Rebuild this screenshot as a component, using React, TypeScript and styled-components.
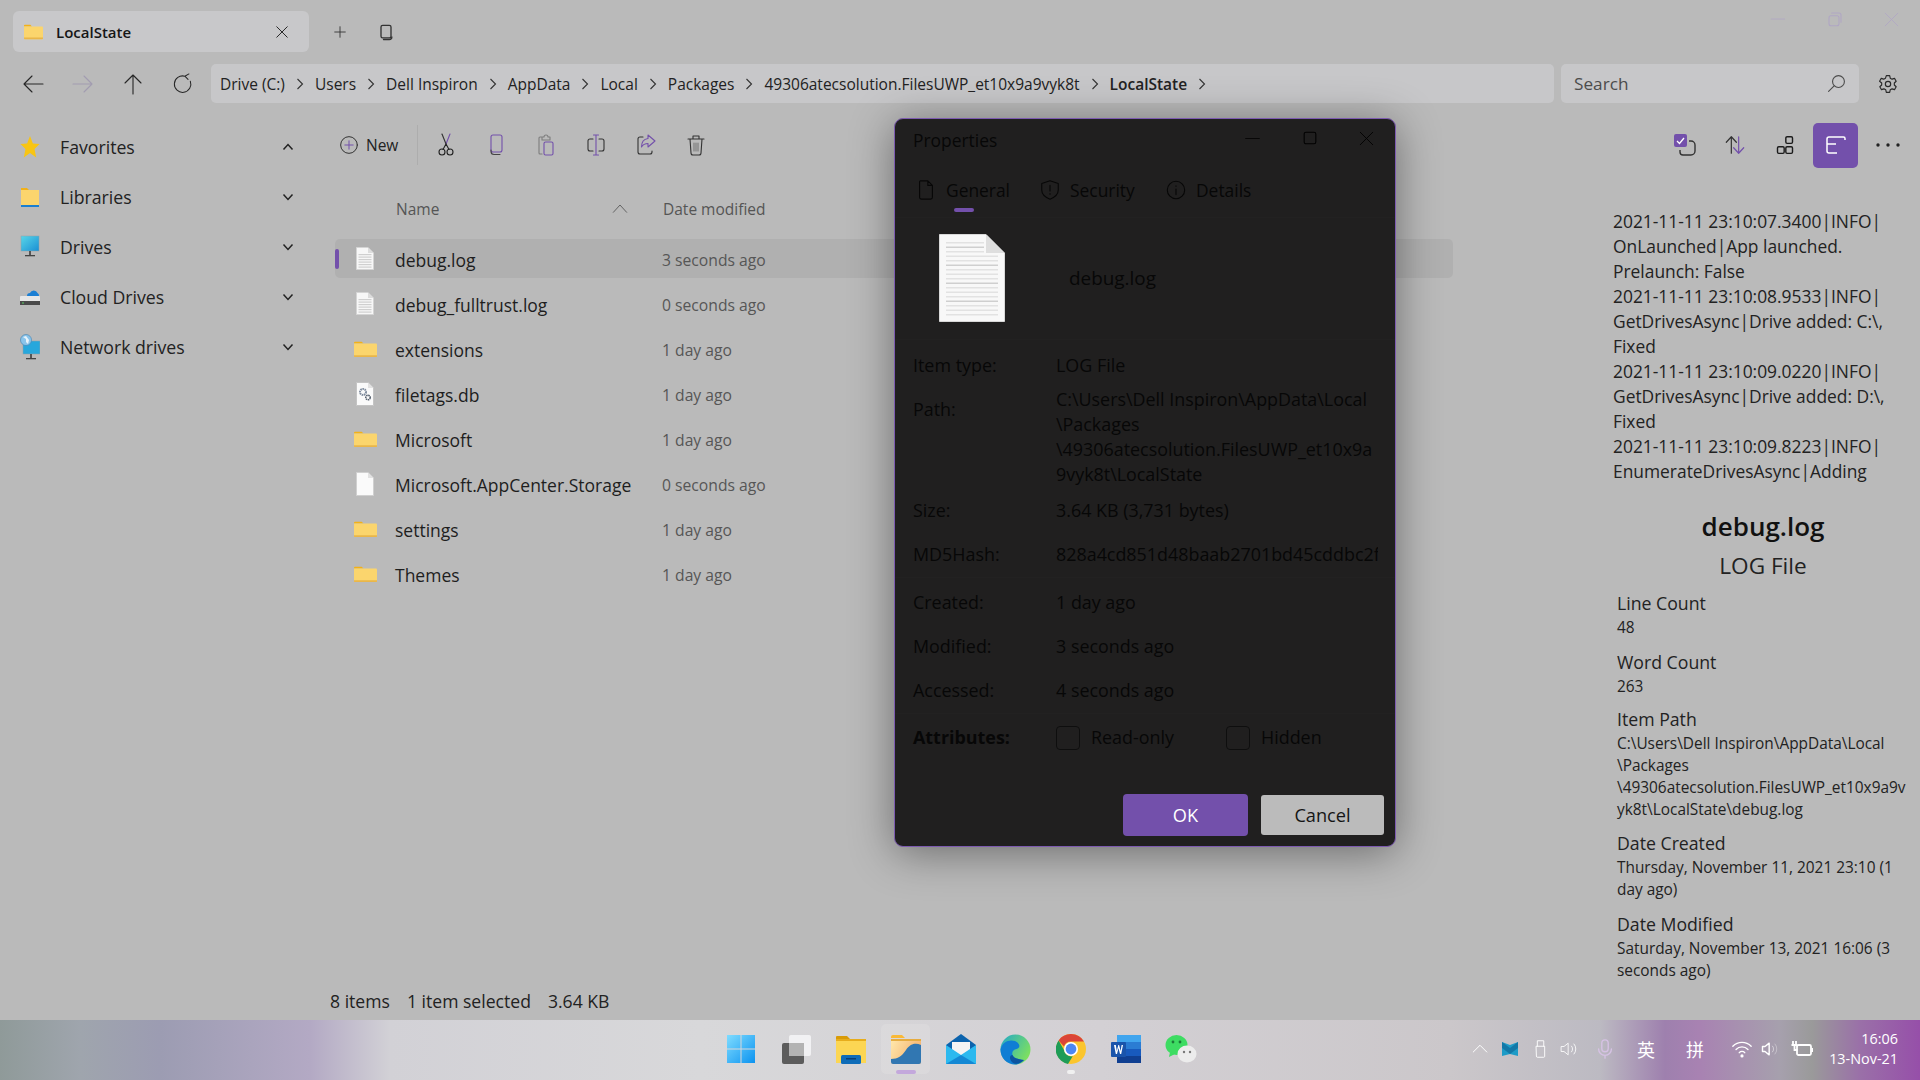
import React from "react";
import styled, { createGlobalStyle } from "styled-components";

const FONT = `"Open Sans", "Noto Sans", "Noto Sans CJK SC", sans-serif`;
const PURPLE = "#7350ab";

const GlobalStyle = createGlobalStyle`
  html, body {
    margin: 0;
    padding: 0;
    height: 100%;
    overflow: hidden;
    background: #bababa;
  }
  #root {
    height: 100%;
  }
  * {
    box-sizing: border-box;
  }
`;

const Page = styled.div`
  position: relative;
  width: 1920px;
  height: 1080px;
  display: flex;
  flex-direction: column;
  font-family: ${FONT};
  color: #1c1c1c;
  background: #bababa;
  overflow: hidden;
`;

const TitleBar = styled.div`
  height: 64px;
  flex: none;
  display: flex;
  align-items: flex-start;
  padding: 11px 0 0 13px;
`;

const Tab = styled.div`
  width: 296px;
  height: 41px;
  border-radius: 6px;
  background: #c8c8ca;
  display: flex;
  align-items: center;
  padding: 0 18px 0 11px;
  gap: 13px;
  font-size: 15px;
  font-weight: 600;
  color: #161616;
`;

const TabLabel = styled.span`
  flex: 1;
`;

const TabAction = styled.span<{ $first?: boolean }>`
  width: 46px;
  height: 41px;
  display: flex;
  align-items: center;
  justify-content: center;
  margin-left: ${(p) => (p.$first ? "8px" : "0")};
  color: #333;
`;

const WindowControls = styled.div`
  margin-left: auto;
  margin-top: -11px;
  display: flex;
  color: #b0a6c4;
`;

const WindowButton = styled.span`
  width: 57px;
  height: 38px;
  display: flex;
  align-items: center;
  justify-content: center;
`;

const AddressRow = styled.div`
  height: 39px;
  flex: none;
  display: flex;
  align-items: center;
  padding-left: 8px;
`;

const NavButton = styled.span<{ $muted?: boolean }>`
  width: 50px;
  height: 39px;
  display: flex;
  align-items: center;
  justify-content: center;
  color: ${(p) => (p.$muted ? "#a29cb0" : "#262626")};
`;

const AddressBar = styled.div`
  width: 1343px;
  height: 39px;
  margin-left: 3px;
  border-radius: 5px;
  background: #c7c7c9;
  display: flex;
  align-items: center;
  padding-left: 9px;
  font-size: 15.5px;
  white-space: nowrap;
  color: #222;
`;

const Crumb = styled.span<{ $current?: boolean }>`
  font-weight: ${(p) => (p.$current ? 600 : 400)};
`;

const CrumbSep = styled.span`
  width: 30px;
  display: flex;
  justify-content: center;
  color: #333;
`;

const SearchBox = styled.div`
  width: 298px;
  height: 39px;
  margin-left: 7px;
  border-radius: 5px;
  background: #c7c7c9;
  display: flex;
  align-items: center;
  justify-content: space-between;
  padding: 0 13px;
  font-size: 17.2px;
  color: #4c4c4c;
`;

const SettingsButton = styled.span`
  width: 58px;
  display: flex;
  justify-content: center;
  color: #2a2a2a;
`;

const Body = styled.div`
  flex: 1;
  min-height: 0;
  display: flex;
  padding-top: 19px;
`;

const Sidebar = styled.nav`
  width: 330px;
  flex: none;
`;

const SidebarItem = styled.div`
  height: 50px;
  display: flex;
  align-items: center;
  padding-left: 18px;
  font-size: 17.7px;
  color: #222;
`;

const SidebarIcon = styled.span`
  width: 24px;
  height: 30px;
  display: flex;
  align-items: center;
  justify-content: center;
  margin-right: 18px;
`;

const SidebarLabel = styled.span`
  flex: 1;
`;

const SidebarChevron = styled.span`
  width: 14px;
  margin-right: 35px;
  display: flex;
  color: #222;
`;

const Main = styled.main`
  flex: 1;
  min-width: 0;
  display: flex;
  flex-direction: column;
`;

const CommandBar = styled.div`
  height: 46px;
  flex: none;
  display: flex;
  align-items: center;
  padding-left: 9px;
`;

const NewButton = styled.div`
  display: flex;
  align-items: center;
  gap: 7px;
  width: 78px;
  font-size: 15.5px;
  color: #222;
`;

const BarDivider = styled.span`
  width: 1px;
  height: 40px;
  background: #adadad;
  margin-right: 3px;
`;

const BarIcon = styled.span`
  width: 50px;
  height: 46px;
  display: flex;
  align-items: center;
  justify-content: center;
`;

const BarRight = styled.div`
  margin-left: auto;
  padding-right: 7px;
  display: flex;
  align-items: center;
`;

const ActiveTile = styled.span`
  width: 45px;
  height: 45px;
  margin: 0 5px 0 3px;
  border-radius: 5px;
  background: ${PURPLE};
  display: flex;
  align-items: center;
  justify-content: center;
`;

const Content = styled.div`
  flex: 1;
  min-height: 0;
  display: flex;
`;

const FilePane = styled.section`
  flex: 1;
  min-width: 0;
  padding: 20px 0 0 5px;
`;

const ColumnHead = styled.div`
  height: 42px;
  width: 1118px;
  margin-bottom: 9px;
  display: flex;
  align-items: center;
  padding-left: 61px;
  font-size: 15.5px;
  color: #555;
`;

const NameHead = styled.span`
  width: 216px;
`;

const SortMark = styled.span`
  width: 51px;
  display: flex;
  color: #555;
`;

const FileRow = styled.div<{ $selected?: boolean }>`
  position: relative;
  width: 1118px;
  height: 39px;
  margin-bottom: 6px;
  border-radius: 5px;
  display: flex;
  align-items: center;
  padding-left: 15px;
  background: ${(p) => (p.$selected ? "#b0b0b0" : "transparent")};
`;

const SelectBar = styled.span`
  position: absolute;
  left: 0;
  top: 10px;
  width: 4px;
  height: 20px;
  border-radius: 2px;
  background: ${PURPLE};
`;

const FileIconBox = styled.span`
  width: 30px;
  height: 30px;
  display: flex;
  align-items: center;
  justify-content: center;
  margin-right: 15px;
`;

const FileName = styled.span`
  width: 267px;
  padding-top: 2px;
  font-size: 17.5px;
  white-space: nowrap;
  color: #1e1e1e;
`;

const FileDate = styled.span`
  padding-top: 3px;
  font-size: 15.7px;
  color: #565656;
`;

const StatusBar = styled.div`
  height: 38px;
  flex: none;
  display: flex;
  align-items: center;
  gap: 17px;
  font-size: 17.6px;
  color: #222;
`;

const Preview = styled.aside`
  width: 307px;
  flex: none;
  padding: 41px 7px 0 0;
`;

const LogLine = styled.div`
  height: 25px;
  line-height: 25px;
  font-size: 17.4px;
  white-space: nowrap;
  color: #222;
`;

const PreviewTitle = styled.div`
  margin-top: 26px;
  text-align: center;
  font-size: 26px;
  line-height: 32px;
  font-weight: 600;
  color: #111;
`;

const PreviewType = styled.div`
  margin-top: 9px;
  text-align: center;
  font-size: 22.6px;
  line-height: 30px;
  color: #222;
`;

const PropBlock = styled.div<{ $gap: number }>`
  margin: ${(p) => p.$gap}px 0 0 4px;
`;

const PropName = styled.div`
  font-size: 17.7px;
  line-height: 27px;
  color: #222;
`;

const PropValue = styled.div`
  font-size: 15.4px;
  line-height: 22px;
  white-space: nowrap;
  color: #222;
`;

const Dialog = styled.div`
  position: absolute;
  left: 894px;
  top: 118px;
  width: 502px;
  height: 729px;
  border: 1px solid #7c5ab0;
  border-radius: 9px;
  background: #201f1f;
  box-shadow: 0 6px 44px rgba(0, 0, 0, 0.42);
  display: flex;
  flex-direction: column;
  color: #070707;
`;

const DialogHead = styled.div`
  height: 42px;
  flex: none;
  display: flex;
  align-items: center;
  padding-left: 18px;
  font-size: 17.4px;
`;

const DialogTitle = styled.span`
  flex: 1;
`;

const DialogControls = styled.div`
  display: flex;
  margin-top: -4px;
  color: #000;
`;

const DialogControl = styled.span`
  width: 57px;
  height: 30px;
  display: flex;
  align-items: center;
  justify-content: center;
`;

const DialogTabs = styled.div`
  height: 57px;
  flex: none;
  display: flex;
  padding: 17px 0 0 20px;
  border-bottom: 1px solid #222121;
`;

const DialogTab = styled.div<{ $active?: boolean; $width: number }>`
  position: relative;
  width: ${(p) => p.$width}px;
  height: 24px;
  display: flex;
  align-items: center;
  gap: 9px;
  font-size: 17.4px;

  ${(p) =>
    p.$active
      ? `&::after {
    content: "";
    position: absolute;
    left: 39px;
    bottom: -10px;
    width: 20px;
    height: 4px;
    border-radius: 2px;
    background: ${PURPLE};
  }`
      : ""}
`;

const DialogFileHead = styled.div`
  height: 122px;
  flex: none;
  display: flex;
  align-items: flex-start;
  padding: 16px 0 0 44px;
  border-bottom: 1px solid #222121;
`;

const DialogFileName = styled.span`
  margin: 32px 0 0 64px;
  font-size: 18.9px;
  line-height: 25px;
`;

const PropSection = styled.div<{ $top: number; $bottom: number; $line?: boolean }>`
  flex: none;
  padding: ${(p) => p.$top}px 0 ${(p) => p.$bottom}px 18px;
  border-bottom: ${(p) => (p.$line ? "1px solid #222121" : "none")};
  display: flex;
  flex-direction: column;
`;

const PropRow = styled.div<{ $gap?: number }>`
  display: grid;
  grid-template-columns: 143px 1fr;
  margin-top: ${(p) => p.$gap ?? 0}px;
  font-size: 17.9px;
  line-height: 25px;
`;

const PropLabel = styled.span<{ $drop?: number; $bold?: boolean }>`
  margin-top: ${(p) => p.$drop ?? 0}px;
  font-weight: ${(p) => (p.$bold ? 700 : 400)};
`;

const PropText = styled.span`
  white-space: nowrap;
`;

const ClippedText = styled.span`
  width: 322px;
  overflow: hidden;
  white-space: nowrap;
`;

const CheckRow = styled.div`
  display: flex;
  align-items: center;
`;

const CheckBox = styled.span`
  width: 24px;
  height: 24px;
  border: 1px solid #0e0e0e;
  border-radius: 4px;
  margin-right: 11px;
`;

const CheckLabel = styled.span<{ $width: number }>`
  width: ${(p) => p.$width}px;
`;

const DialogFooter = styled.div`
  margin-top: auto;
  padding: 0 11px 10px 0;
  display: flex;
  justify-content: flex-end;
  align-items: center;
  gap: 13px;
`;

const OkButton = styled.button`
  width: 125px;
  height: 42px;
  border: none;
  border-radius: 4px;
  background: ${PURPLE};
  color: #fff;
  font-family: ${FONT};
  font-size: 18.2px;
`;

const CancelButton = styled.button`
  width: 123px;
  height: 40px;
  border: none;
  border-radius: 3px;
  background: #bbbbbb;
  color: #151515;
  font-family: ${FONT};
  font-size: 18.2px;
`;

const Taskbar = styled.footer`
  height: 60px;
  flex: none;
  padding-bottom: 2px;
  background: linear-gradient(
    90deg,
    #8f9a99 0,
    #9fa5ad 80px,
    #9c9cb2 160px,
    #b3a9c4 310px,
    #d2d1d6 390px,
    #d8d8da 700px,
    #d3d0d4 1100px,
    #cbc7ca 1450px,
    #bcbac2 1600px,
    #9e80ae 1665px,
    #a882b2 1700px,
    #a6a0ad 1780px,
    #9a9a9a 1812px,
    #9a70a8 1860px,
    #964fa9 1920px
  );
  display: flex;
  align-items: center;
`;

const TaskApps = styled.div`
  display: flex;
  margin-left: 713px;
  width: 524px;
`;

const TaskApp = styled.span<{ $active?: boolean }>`
  position: relative;
  width: 55px;
  height: 50px;
  display: flex;
  align-items: center;
  justify-content: center;

  ${(p) =>
    p.$active
      ? `&::before {
    content: "";
    position: absolute;
    left: 3px;
    right: 3px;
    top: 0;
    bottom: 0;
    border-radius: 5px;
    background: rgba(255, 255, 255, 0.12);
  }`
      : ""}
`;

const RunDot = styled.span<{ $wide?: boolean }>`
  position: absolute;
  left: 50%;
  bottom: 0;
  transform: translateX(-50%);
  width: ${(p) => (p.$wide ? 20 : 8)}px;
  height: 4px;
  border-radius: 2px;
  background: ${(p) => (p.$wide ? "#c3a8dc" : "#f0f0f0")};
`;

const Tray = styled.div`
  display: flex;
  align-items: center;
  margin-left: 228px;
  color: #fff;
`;

const TrayItem = styled.span<{ $width: number }>`
  width: ${(p) => p.$width}px;
  display: flex;
  justify-content: center;
  align-items: center;
`;

const ImeLabel = styled.span`
  font-family: "Noto Sans CJK SC", sans-serif;
  font-size: 18px;
  color: #fff;
`;

const Clock = styled.div`
  width: 77px;
  text-align: right;
  font-size: 14.4px;
  line-height: 20px;
  color: #fff;
`;

type GlyphProps = { size?: number; children: React.ReactNode; width?: number; sw?: number };

const Glyph = ({ size = 20, width, sw = 1.2, children }: GlyphProps) => (
  <svg
    width={width ?? size}
    height={size}
    viewBox="0 0 24 24"
    fill="none"
    stroke="currentColor"
    strokeWidth={sw}
    strokeLinecap="round"
    strokeLinejoin="round"
  >
    {children}
  </svg>
);

const ChevronRight = () => (
  <svg width="8" height="14" viewBox="0 0 8 14" fill="none" stroke="currentColor" strokeWidth="1.1">
    <path d="M1.5 2l5 5-5 5" />
  </svg>
);

const ChevronSmall = ({ up }: { up?: boolean }) => (
  <svg width="14" height="10" viewBox="0 0 14 10" fill="none" stroke="currentColor" strokeWidth="1.5">
    <path d={up ? "M2.5 7.5L7 2.5l4.5 5" : "M2.5 2.5L7 7.5l4.5-5"} />
  </svg>
);

const FolderTiny = ({ w = 23, h = 18 }: { w?: number; h?: number }) => (
  <svg width={w} height={h} viewBox="0 0 24 20" preserveAspectRatio="none">
    <path d="M0 3a1 1 0 0 1 1-1h7l2 2H0z" fill="#f2b118" />
    <path d="M0 4h23a1 1 0 0 1 1 1v13a1 1 0 0 1-1 1H1a1 1 0 0 1-1-1z" fill="#fbd56d" />
    <path d="M0 17h24v1a1 1 0 0 1-1 1H1a1 1 0 0 1-1-1z" fill="#e9b64a" />
  </svg>
);

const LogFile = ({ w = 18, h = 23 }: { w?: number; h?: number }) => (
  <svg width={w} height={h} viewBox="0 0 18 23">
    <path d="M0.5 0.5H12L17.5 6V22.5H0.5z" fill="#f7f7f7" stroke="#d4d4d4" />
    <path d="M12 0.5V6h5.5z" fill="#dcdcdc" />
    {[7, 9.5, 12, 14.5, 17, 19.5].map((y) => (
      <rect key={y} x="2.5" y={y} width="13" height="1.2" fill="#cfcfcf" />
    ))}
  </svg>
);

const BlankFile = () => (
  <svg width="18" height="24" viewBox="0 0 18 24">
    <path d="M0.5 0.5H12L17.5 6V23.5H0.5z" fill="#fafafa" stroke="#d0d0d0" />
    <path d="M12 0.5V6h5.5z" fill="#e2e2e2" />
  </svg>
);

const DbFile = () => (
  <svg width="18" height="24" viewBox="0 0 18 24">
    <path d="M0.5 0.5H12L17.5 6V23.5H0.5z" fill="#fafafa" stroke="#c4c4c4" />
    <path d="M12 0.5V6h5.5z" fill="#e2e2e2" />
    <circle cx="7" cy="10" r="3" fill="none" stroke="#7f8c9e" strokeWidth="2" strokeDasharray="1.6 .6" />
    <circle cx="12" cy="15.5" r="2.2" fill="none" stroke="#56606e" strokeWidth="1.6" strokeDasharray="1.4 .5" />
  </svg>
);

const BigFile = () => (
  <svg width="66" height="88" viewBox="0 0 66 88">
    <path d="M0.5 0.5H47L65.5 19V87.5H0.5z" fill="#f8f8f8" stroke="#d8d8d8" />
    <path d="M47 0.5V19h18.5z" fill="#dedede" />
    {Array.from({ length: 17 }).map((_, i) => (
      <rect key={i} x="7" y={8 + i * 4.5} width={i < 3 ? 38 : 52} height="1.5" fill={i % 4 === 1 ? "#cfcfcf" : "#e2e2e2"} />
    ))}
  </svg>
);

const StarIcon = () => (
  <svg width="20" height="24" viewBox="0 0 20 24">
    <path d="M10 1l2.9 7.6 6.6.5-5 5 1.7 8.4L10 18l-6.2 4.5 1.7-8.4-5-5 6.6-.5z" fill="#f8c513" />
  </svg>
);

const LibraryIcon = () => (
  <svg width="20" height="24" viewBox="0 0 20 24">
    <path d="M1 3h6l2 2H1z" fill="#f2b118" />
    <rect x="1" y="5" width="18" height="16" fill="#fbd56d" />
    <rect x="1" y="20" width="18" height="2" fill="#1a7fd0" />
  </svg>
);

const MonitorIcon = () => (
  <svg width="20" height="24" viewBox="0 0 20 24">
    <defs>
      <linearGradient id="mon" x1="0" y1="0" x2="1" y2="1">
        <stop offset="0" stopColor="#58d6e8" />
        <stop offset="1" stopColor="#1a8fd4" />
      </linearGradient>
    </defs>
    <rect x="1" y="1" width="18" height="15" fill="url(#mon)" stroke="#8fa0a8" strokeWidth=".5" />
    <rect x="9" y="16" width="2" height="4" fill="#555" />
    <rect x="5" y="20" width="10" height="1.3" fill="#444" />
  </svg>
);

const CloudDriveIcon = () => (
  <svg width="20" height="24" viewBox="0 0 20 24">
    <rect x="0" y="11" width="20" height="9" rx="1" fill="#e6e6e6" />
    <rect x="0" y="16" width="20" height="4" fill="#4a4a4a" />
    <circle cx="3" cy="18" r=".8" fill="#5fe06a" />
    <path d="M7 11a3 3 0 0 1 3-3 4 4 0 0 1 7.5 0 3 3 0 0 1 1.5 3z" fill="#1b7fd4" />
  </svg>
);

const NetworkIcon = () => (
  <svg width="20" height="26" viewBox="0 0 20 26">
    <rect x="3" y="7" width="17" height="13" fill="#27a7dc" stroke="#8fa0a8" strokeWidth=".5" />
    <rect x="10" y="20" width="2" height="4" fill="#555" />
    <rect x="6" y="24" width="10" height="1.3" fill="#444" />
    <circle cx="6" cy="6" r="5.5" fill="#8ac4ea" stroke="#3f7fb0" strokeWidth=".6" />
    <path d="M3 3l3 2 0 3 2 2 1-4-3-4z" fill="#e9f4fb" />
  </svg>
);

const WinLogo = () => (
  <svg width="30" height="30" viewBox="0 0 30 30">
    <defs>
      <linearGradient id="win" x1="0" y1="0" x2="1" y2="1">
        <stop offset="0" stopColor="#7fdcff" />
        <stop offset="1" stopColor="#0c93f0" />
      </linearGradient>
    </defs>
    <path d="M1 1h13.5v13.5H1zM15.5 1H29v13.5H15.5zM1 15.5h13.5V29H1zM15.5 15.5H29V29H15.5z" fill="url(#win)" />
  </svg>
);

const TaskViewIcon = () => (
  <svg width="30" height="30" viewBox="0 0 30 30">
    <rect x="1" y="9" width="22" height="21" rx="2" fill="#5c5c5c" />
    <rect x="8" y="1" width="22" height="21" rx="2" fill="#f5f5f6" opacity=".88" />
    <rect x="8" y="9" width="15" height="13" fill="#b3b3b3" />
  </svg>
);

const ExplorerIcon = () => (
  <svg width="30" height="30" viewBox="0 0 30 30">
    <path d="M0 3a1 1 0 0 1 1-1h10l3 3h-14z" fill="#d99b07" />
    <path d="M0 5h30v24H0z" fill="#fcd653" />
    <path d="M0 5h30v2H0z" fill="#e7ad1c" />
    <rect x="5" y="21" width="20" height="9" rx="1.5" fill="#0f6cb8" />
    <rect x="10" y="24" width="10" height="1.5" fill="#083f77" />
  </svg>
);

const FilesIcon = () => (
  <svg width="30" height="31" viewBox="0 0 30 31">
    <defs>
      <linearGradient id="filesA" x1="0" y1="0" x2="1" y2=".4">
        <stop offset="0" stopColor="#ffe4a0" />
        <stop offset="1" stopColor="#f4a85c" />
      </linearGradient>
    </defs>
    <path d="M0 3a2 2 0 0 1 2-2h9l3 3h-14z" fill="#f9b01c" />
    <path d="M0 5h30v6H0z" fill="#e3a126" />
    <path d="M0 7h30v21a2 2 0 0 1-2 2H2a2 2 0 0 1-2-2z" fill="url(#filesA)" />
    <path d="M0 25c7 0 11-3 15-9 5-7 10-7 15-5v17a2 2 0 0 1-2 2H2a2 2 0 0 1-2-2z" fill="#1565a8" />
  </svg>
);

const MailIcon = () => (
  <svg width="30" height="30" viewBox="0 0 30 30">
    <path d="M15 0l15 11v19H0V11z" fill="#0c63ad" />
    <path d="M6 8h18v8l-9 6-9-6z" fill="#f4f4f4" />
    <path d="M0 11l15 10 15-10v19H0z" fill="#2cb9ef" />
    <path d="M0 30l15-9 15 9z" fill="#1488d4" />
  </svg>
);

const EdgeIcon = () => (
  <svg width="31" height="31" viewBox="0 0 31 31">
    <defs>
      <linearGradient id="edgeA" x1="0" y1="0" x2="1" y2=".6">
        <stop offset="0" stopColor="#22a8c9" />
        <stop offset="1" stopColor="#7ee05f" />
      </linearGradient>
    </defs>
    <circle cx="15.5" cy="15.5" r="15" fill="url(#edgeA)" />
    <path d="M.5 15.5C2 8 9 5 15 7c5 2 6 7 1.5 8-3 .8-5 2.5-4 6 1 3 5 4.5 11.500 5-2.400 2.800-6 4.500-9 4.500C7 30.500.5 24 .5 15.500z" fill="#0f7ed4" />
    <path d="M12.500 21c1 3 5 4.500 11.500 5-3.800 4-9.500 5-12 2-3-3-2.500-7 .5-7z" fill="#0c549f" />
  </svg>
);

const ChromeIcon = () => (
  <svg width="30" height="30" viewBox="0 0 30 30">
    <circle cx="15" cy="15" r="15" fill="#fbc52d" />
    <path d="M15 0a15 15 0 0 1 13 7.500H15a7.500 7.500 0 0 0-7 5L2.600 6.400A15 15 0 0 1 15 0z" fill="#db4437" />
    <path d="M2.600 6.400L8 16a7.500 7.500 0 0 0 8.700 6.300L12 30A15 15 0 0 1 2.600 6.400z" fill="#1e9c57" />
    <circle cx="15" cy="15" r="7" fill="#fff" />
    <circle cx="15" cy="15" r="5.400" fill="#4c87f2" />
  </svg>
);

const WordIcon = () => (
  <svg width="30" height="30" viewBox="0 0 30 30">
    <rect x="6" y="1" width="24" height="7" fill="#41a5ee" />
    <rect x="6" y="8" width="24" height="7" fill="#2b7cd3" />
    <rect x="6" y="15" width="24" height="7" fill="#185abd" />
    <rect x="6" y="22" width="24" height="7" fill="#103f91" />
    <rect x="0" y="8" width="15" height="15" rx="1" fill="#1a54ab" />
    <path d="M3 11l1.800 9h1.200l1.500-6 1.500 6h1.200l1.800-9h-1.400l-1 6-1.500-6H7.300l-1.500 6-1-6z" fill="#fff" />
  </svg>
);

const WeChatIcon = () => (
  <svg width="32" height="30" viewBox="0 0 32 30">
    <ellipse cx="11.500" cy="11" rx="11" ry="10" fill="#3ddc62" />
    <path d="M5 18l-1 5 6-3z" fill="#3ddc62" />
    <circle cx="8" cy="8" r="1.400" fill="#1c7a38" />
    <circle cx="15" cy="8" r="1.400" fill="#1c7a38" />
    <ellipse cx="22" cy="20" rx="9.500" ry="8.500" fill="#ececec" />
    <circle cx="19" cy="18" r="1.200" fill="#777" />
    <circle cx="25" cy="18" r="1.200" fill="#777" />
  </svg>
);

const breadcrumbs = [
  "Drive (C:)",
  "Users",
  "Dell Inspiron",
  "AppData",
  "Local",
  "Packages",
  "49306atecsolution.FilesUWP_et10x9a9vyk8t",
];

const sideItems = [
  { label: "Favorites", icon: <StarIcon />, up: true },
  { label: "Libraries", icon: <LibraryIcon /> },
  { label: "Drives", icon: <MonitorIcon /> },
  { label: "Cloud Drives", icon: <CloudDriveIcon /> },
  { label: "Network drives", icon: <NetworkIcon /> },
];

const files = [
  { name: "debug.log", date: "3 seconds ago", icon: <LogFile />, selected: true },
  { name: "debug_fulltrust.log", date: "0 seconds ago", icon: <LogFile /> },
  { name: "extensions", date: "1 day ago", icon: <FolderTiny /> },
  { name: "filetags.db", date: "1 day ago", icon: <DbFile /> },
  { name: "Microsoft", date: "1 day ago", icon: <FolderTiny /> },
  { name: "Microsoft.AppCenter.Storage", date: "0 seconds ago", icon: <BlankFile /> },
  { name: "settings", date: "1 day ago", icon: <FolderTiny /> },
  { name: "Themes", date: "1 day ago", icon: <FolderTiny /> },
];

const logLines = [
  "2021-11-11 23:10:07.3400|INFO|",
  "OnLaunched|App launched.",
  "Prelaunch: False",
  "2021-11-11 23:10:08.9533|INFO|",
  "GetDrivesAsync|Drive added: C:\\,",
  "Fixed",
  "2021-11-11 23:10:09.0220|INFO|",
  "GetDrivesAsync|Drive added: D:\\,",
  "Fixed",
  "2021-11-11 23:10:09.8223|INFO|",
  "EnumerateDrivesAsync|Adding",
];

const details = [
  { name: "Line Count", gap: 9, lines: ["48"] },
  { name: "Word Count", gap: 10, lines: ["263"] },
  {
    name: "Item Path",
    gap: 8,
    lines: [
      "C:\\Users\\Dell Inspiron\\AppData\\Local",
      "\\Packages",
      "\\49306atecsolution.FilesUWP_et10x9a9v",
      "yk8t\\LocalState\\debug.log",
    ],
  },
  {
    name: "Date Created",
    gap: 9,
    lines: ["Thursday, November 11, 2021 23:10 (1", "day ago)"],
  },
  {
    name: "Date Modified",
    gap: 10,
    lines: ["Saturday, November 13, 2021 16:06 (3", "seconds ago)"],
  },
];

const App = () => (
  <Page>
    <GlobalStyle />
    <TitleBar>
      <Tab>
        <FolderTiny w={19} h={17} />
        <TabLabel>LocalState</TabLabel>
        <Glyph size={18}>
          <path d="M5 5l14 14M19 5L5 19" />
        </Glyph>
      </Tab>
      <TabAction $first>
        <Glyph size={18}>
          <path d="M12 5v14M5 12h14" />
        </Glyph>
      </TabAction>
      <TabAction>
        <Glyph size={20} sw={1.6}>
          <rect x="6" y="4" width="12" height="15" rx="2" />
          <path d="M9 21h7a3 3 0 0 0 3-3" />
        </Glyph>
      </TabAction>
      <WindowControls>
        <WindowButton>
          <Glyph size={16}>
            <path d="M2 12h20" />
          </Glyph>
        </WindowButton>
        <WindowButton>
          <Glyph size={16} sw={1.6}>
            <rect x="3" y="7" width="15" height="15" rx="3" />
            <path d="M7 3h11a3 3 0 0 1 3 3v11" />
          </Glyph>
        </WindowButton>
        <WindowButton>
          <Glyph size={17}>
            <path d="M3 3l18 18M21 3L3 21" />
          </Glyph>
        </WindowButton>
      </WindowControls>
    </TitleBar>

    <AddressRow>
      <NavButton>
        <Glyph size={24} sw={1.1}>
          <path d="M22 12H3M11 4l-8 8 8 8" />
        </Glyph>
      </NavButton>
      <NavButton $muted>
        <Glyph size={24} sw={1.1}>
          <path d="M2 12h19M13 4l8 8-8 8" />
        </Glyph>
      </NavButton>
      <NavButton>
        <Glyph size={24} sw={1.1}>
          <path d="M12 22V3M4 11l8-8 8 8" />
        </Glyph>
      </NavButton>
      <NavButton>
        <Glyph size={22} sw={1.1}>
          <path d="M14 3.500a9 9 0 1 0 6 5.500M14 3.500L18.500 1M14 3.500l3.500 3.500" />
        </Glyph>
      </NavButton>
      <AddressBar>
        {breadcrumbs.map((crumb) => (
          <React.Fragment key={crumb}>
            <Crumb>{crumb}</Crumb>
            <CrumbSep>
              <ChevronRight />
            </CrumbSep>
          </React.Fragment>
        ))}
        <Crumb $current>LocalState</Crumb>
        <CrumbSep>
          <ChevronRight />
        </CrumbSep>
      </AddressBar>
      <SearchBox>
        Search
        <Glyph size={19} sw={1.4}>
          <circle cx="14.500" cy="9.500" r="7.500" />
          <path d="M9 15l-7 7" />
        </Glyph>
      </SearchBox>
      <SettingsButton>
        <Glyph size={20} sw={1.4}>
          <circle cx="12" cy="12" r="3.200" />
          <path d="M10 2h4l.7 3 2.200 1.200 2.900-1 2 3.500-2.200 2.100v2.400l2.200 2.100-2 3.500-2.900-1-2.200 1.200-.7 3h-4l-.7-3-2.200-1.200-2.900 1-2-3.500 2.200-2.100v-2.400L1.900 8.700l2-3.500 2.900 1L9 5z" />
        </Glyph>
      </SettingsButton>
    </AddressRow>

    <Body>
      <Sidebar>
        {sideItems.map((item) => (
          <SidebarItem key={item.label}>
            <SidebarIcon>{item.icon}</SidebarIcon>
            <SidebarLabel>{item.label}</SidebarLabel>
            <SidebarChevron>
              <ChevronSmall up={item.up} />
            </SidebarChevron>
          </SidebarItem>
        ))}
      </Sidebar>

      <Main>
        <CommandBar>
          <NewButton>
            <Glyph size={20}>
              <circle cx="12" cy="12" r="10" stroke="#333" />
              <path d="M12 7v10M7 12h10" stroke={PURPLE} />
            </Glyph>
            New
          </NewButton>
          <BarDivider />
          <BarIcon>
            <Glyph size={24} sw={1.1}>
              <path d="M16 1l-4 10" stroke={PURPLE} />
              <path d="M8 1l4 10" stroke="#333" />
              <circle cx="8" cy="19" r="3" stroke="#222" />
              <circle cx="16" cy="19" r="3" stroke="#222" />
              <path d="M12 11l-3 5.500M12 11l3 5.500" stroke="#222" />
            </Glyph>
          </BarIcon>
          <BarIcon>
            <Glyph size={24} sw={1.1}>
              <rect x="7" y="2" width="11" height="17" rx="2" stroke={PURPLE} />
              <path d="M7 17v1.500a3 3 0 0 0 3 3h6" stroke="#444" />
            </Glyph>
          </BarIcon>
          <BarIcon>
            <Glyph size={24} sw={1.1}>
              <path d="M8 4H6a1 1 0 0 0-1 1v15a1 1 0 0 0 1 1h2M10 4a2 2 0 0 1 4 0h2v3H8V4z" stroke="#7d7d7d" />
              <rect x="10" y="9" width="9" height="13" rx="1.500" stroke={PURPLE} />
            </Glyph>
          </BarIcon>
          <BarIcon>
            <Glyph size={24} sw={1.1}>
              <path d="M9 6H6a2 2 0 0 0-2 2v8a2 2 0 0 0 2 2h3M15 6h3a2 2 0 0 1 2 2v8a2 2 0 0 1-2 2h-3" stroke="#333" />
              <path d="M12 2v20M9.500 2h5M9.500 22h5" stroke={PURPLE} />
            </Glyph>
          </BarIcon>
          <BarIcon>
            <Glyph size={24} sw={1.1}>
              <path d="M9 4H6a2 2 0 0 0-2 2v13a2 2 0 0 0 2 2h10a2 2 0 0 0 2-2v-1" stroke="#333" />
              <path d="M14 2l7 6-7 6v-3.500c-3 0-5 1-6.500 3.500 0-5 2.500-8 6.500-8.500z" stroke={PURPLE} />
            </Glyph>
          </BarIcon>
          <BarIcon>
            <Glyph size={24} sw={1.1}>
              <path d="M4 6h16M9 6V3h6v3M6 6l1 14a2 2 0 0 0 2 2h6a2 2 0 0 0 2-2l1-14" stroke="#333" />
              <path d="M10 10v8M12 10v8M14 10v8" stroke="#777" />
            </Glyph>
          </BarIcon>
          <BarRight>
            <BarIcon>
              <svg width="22" height="22" viewBox="0 0 22 22">
                <rect x="0" y="0" width="13" height="13" rx="2" fill={PURPLE} />
                <path d="M3 7l2.500 2.500L10 4" fill="none" stroke="#fff" strokeWidth="1.300" />
                <path d="M15 7h2a4 4 0 0 1 4 4v6a4 4 0 0 1-4 4h-8a3 3 0 0 1-3-3v-2" fill="none" stroke="#333" strokeWidth="1.400" />
              </svg>
            </BarIcon>
            <BarIcon>
              <Glyph size={22} sw={1.300}>
                <path d="M8 21V3M2.500 9L8 3l5.500 6" stroke="#333" />
                <path d="M16 3v18M10.500 15l5.500 6 5.500-6" stroke={PURPLE} />
              </Glyph>
            </BarIcon>
            <BarIcon>
              <Glyph size={20} sw={1.700}>
                <rect x="13" y="2" width="8" height="8" rx="1.500" />
                <rect x="3" y="14" width="8" height="8" rx="1.500" />
                <rect x="13" y="14" width="8" height="8" rx="1.500" />
              </Glyph>
            </BarIcon>
            <ActiveTile>
              <svg width="20" height="18" viewBox="0 0 20 18" fill="none" stroke="#fff" strokeWidth="1.500">
                <path d="M19 4V2.500A1.500 1.500 0 0 0 17.500 1H3A2 2 0 0 0 1 3v12a2 2 0 0 0 2 2h8M1 8h9" />
              </svg>
            </ActiveTile>
            <BarIcon>
              <svg width="24" height="4" viewBox="0 0 24 4" fill="#222">
                <circle cx="2" cy="2" r="1.700" />
                <circle cx="12" cy="2" r="1.700" />
                <circle cx="22" cy="2" r="1.700" />
              </svg>
            </BarIcon>
          </BarRight>
        </CommandBar>

        <Content>
          <FilePane>
            <ColumnHead>
              <NameHead>Name</NameHead>
              <SortMark>
                <Glyph size={16} sw={1.300}>
                  <path d="M2 17L12 6l10 11" />
                </Glyph>
              </SortMark>
              Date modified
            </ColumnHead>
            {files.map((file) => (
              <FileRow key={file.name} $selected={file.selected}>
                {file.selected && <SelectBar />}
                <FileIconBox>{file.icon}</FileIconBox>
                <FileName>{file.name}</FileName>
                <FileDate>{file.date}</FileDate>
              </FileRow>
            ))}
          </FilePane>
          <Preview>
            {logLines.map((line, i) => (
              <LogLine key={i}>{line}</LogLine>
            ))}
            <PreviewTitle>debug.log</PreviewTitle>
            <PreviewType>LOG File</PreviewType>
            {details.map((d) => (
              <PropBlock key={d.name} $gap={d.gap}>
                <PropName>{d.name}</PropName>
                {d.lines.map((l) => (
                  <PropValue key={l}>{l}</PropValue>
                ))}
              </PropBlock>
            ))}
          </Preview>
        </Content>

        <StatusBar>
          <span>8 items</span>
          <span>1 item selected</span>
          <span>3.64 KB</span>
        </StatusBar>
      </Main>
    </Body>

    <Taskbar>
      <TaskApps>
        <TaskApp><WinLogo /></TaskApp>
        <TaskApp><TaskViewIcon /></TaskApp>
        <TaskApp><ExplorerIcon /></TaskApp>
        <TaskApp $active><FilesIcon /><RunDot $wide /></TaskApp>
        <TaskApp><MailIcon /></TaskApp>
        <TaskApp><EdgeIcon /></TaskApp>
        <TaskApp><ChromeIcon /><RunDot /></TaskApp>
        <TaskApp><WordIcon /></TaskApp>
        <TaskApp><WeChatIcon /></TaskApp>
      </TaskApps>
      <Tray>
        <TrayItem $width={30}>
          <Glyph size={18} sw={1.300}>
            <path d="M3 16l9-9 9 9" />
          </Glyph>
        </TrayItem>
        <TrayItem $width={30}>
          <svg width="18" height="18" viewBox="0 0 18 18">
            <path d="M1 2l8 3 8-3v14l-8-2-8 2z" fill="#1d9bc7" />
            <path d="M1 2l8 6 8-6v6l-8 6-8-6z" fill="#0f6a9a" opacity=".7" />
          </svg>
        </TrayItem>
        <TrayItem $width={32}>
          <Glyph size={22} sw={1}>
            <path d="M8 9V3h7v6M7 9h9v11a1 1 0 0 1-1 1H8a1 1 0 0 1-1-1z" />
          </Glyph>
        </TrayItem>
        <TrayItem $width={24}>
          <Glyph size={20} sw={1}>
            <path d="M3 9h3l5-4v14l-5-4H3z" />
            <path d="M15 8.500a5 5 0 0 1 0 7M18 6a9 9 0 0 1 0 12" />
          </Glyph>
        </TrayItem>
        <TrayItem $width={48}>
          <Glyph size={22} sw={1.500}>
            <rect x="8.500" y="2" width="7" height="13" rx="3.500" stroke="#d6c2e4" />
            <path d="M5 12a7 7 0 0 0 14 0M12 19v3" stroke="#d6c2e4" />
          </Glyph>
        </TrayItem>
        <TrayItem $width={34}><ImeLabel>英</ImeLabel></TrayItem>
        <TrayItem $width={64}><ImeLabel>拼</ImeLabel></TrayItem>
        <TrayItem $width={30}>
          <Glyph size={22} sw={1.500}>
            <path d="M2 9a14 14 0 0 1 20 0M5.500 12.500a9 9 0 0 1 13 0M9 16a4 4 0 0 1 6 0" />
            <circle cx="12" cy="19.500" r="1" fill="#fff" />
          </Glyph>
        </TrayItem>
        <TrayItem $width={26}>
          <Glyph size={20} sw={1.700}>
            <path d="M3 9h3l5-4v14l-5-4H3z" />
            <path d="M15 8.500a5 5 0 0 1 0 7" opacity=".6" strokeWidth="1" />
            <path d="M18 6a9 9 0 0 1 0 12" opacity=".4" strokeWidth="1" />
          </Glyph>
        </TrayItem>
        <TrayItem $width={38}>
          <svg width="22" height="18" viewBox="0 0 22 18" fill="none" stroke="#fff" strokeWidth="1.800">
            <rect x="6" y="5" width="14" height="10" rx="1.500" />
            <path d="M21.300 8v4" />
            <path d="M0.500 5h6M2 1v4M5 1v4M3.500 5v5h3" />
          </svg>
        </TrayItem>
        <Clock>
          16:06
          <br />
          13-Nov-21
        </Clock>
      </Tray>
    </Taskbar>

    <Dialog>
      <DialogHead>
        <DialogTitle>Properties</DialogTitle>
        <DialogControls>
          <DialogControl>
            <Glyph size={15}>
              <path d="M1 12h22" />
            </Glyph>
          </DialogControl>
          <DialogControl>
            <Glyph size={14} sw={1.800}>
              <rect x="2" y="2" width="20" height="20" rx="3" />
            </Glyph>
          </DialogControl>
          <DialogControl>
            <Glyph size={15} sw={1.400}>
              <path d="M2 2l20 20M22 2L2 22" />
            </Glyph>
          </DialogControl>
        </DialogControls>
      </DialogHead>
      <DialogTabs>
        <DialogTab $active $width={124}>
          <Glyph size={22} sw={1.200}>
            <path d="M6 2h8l5 5v13a2 2 0 0 1-2 2H7a2 2 0 0 1-2-2V3a1 1 0 0 1 1-1zM14 2v5h5" />
          </Glyph>
          General
        </DialogTab>
        <DialogTab $width={126}>
          <Glyph size={22} sw={1.200}>
            <path d="M12 2l9 3v7c0 5-4 8-9 10-5-2-9-5-9-10V5zM12 7v6M12 16v.5" />
          </Glyph>
          Security
        </DialogTab>
        <DialogTab $width={120}>
          <Glyph size={22} sw={1.200}>
            <circle cx="12" cy="12" r="9.500" />
            <path d="M12 11v6M12 7.500v.5" />
          </Glyph>
          Details
        </DialogTab>
      </DialogTabs>
      <DialogFileHead>
        <BigFile />
        <DialogFileName>debug.log</DialogFileName>
      </DialogFileHead>
      <PropSection $top={13} $bottom={10} $line>
        <PropRow>
          <PropLabel>Item type:</PropLabel>
          <PropText>LOG File</PropText>
        </PropRow>
        <PropRow $gap={9}>
          <PropLabel $drop={10}>Path:</PropLabel>
          <PropText>
            C:\Users\Dell Inspiron\AppData\Local
            <br />
            \Packages
            <br />
            \49306atecsolution.FilesUWP_et10x9a
            <br />
            9vyk8t\LocalState
          </PropText>
        </PropRow>
        <PropRow $gap={11}>
          <PropLabel>Size:</PropLabel>
          <PropText>3.64 KB (3,731 bytes)</PropText>
        </PropRow>
        <PropRow $gap={19}>
          <PropLabel>MD5Hash:</PropLabel>
          <ClippedText>828a4cd851d48baab2701bd45cddbc2f8e</ClippedText>
        </PropRow>
      </PropSection>
      <PropSection $top={12} $bottom={10} $line>
        <PropRow>
          <PropLabel>Created:</PropLabel>
          <PropText>1 day ago</PropText>
        </PropRow>
        <PropRow $gap={19}>
          <PropLabel>Modified:</PropLabel>
          <PropText>3 seconds ago</PropText>
        </PropRow>
        <PropRow $gap={19}>
          <PropLabel>Accessed:</PropLabel>
          <PropText>4 seconds ago</PropText>
        </PropRow>
      </PropSection>
      <PropSection $top={11} $bottom={0}>
        <PropRow>
          <PropLabel $bold>Attributes:</PropLabel>
          <CheckRow>
            <CheckBox />
            <CheckLabel $width={135}>Read-only</CheckLabel>
            <CheckBox />
            <CheckLabel $width={80}>Hidden</CheckLabel>
          </CheckRow>
        </PropRow>
      </PropSection>
      <DialogFooter>
        <OkButton>OK</OkButton>
        <CancelButton>Cancel</CancelButton>
      </DialogFooter>
    </Dialog>
  </Page>
);

export default App;
